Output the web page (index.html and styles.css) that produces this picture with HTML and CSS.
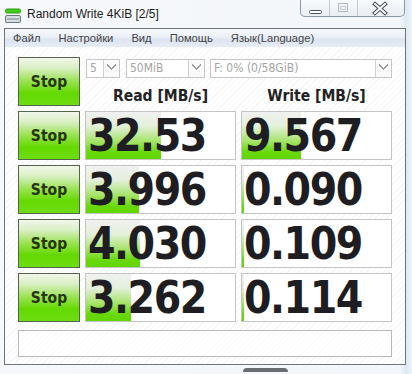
FILE: index.html
```html
<!DOCTYPE html>
<html lang="ru">
<head>
    <meta charset="UTF-8">
    <meta name="viewport" content="width=device-width, initial-scale=1.0">
    <title>Random Write 4KiB [2/5]</title>
    <link rel="stylesheet" href="styles.css">
</head>
<body>

<div class="window">
    <div class="titlebar">
        <svg class="app-icon" width="16" height="16" viewBox="0 0 16 16">
            <rect x="0.5" y="1" width="15" height="4" rx="1.5" fill="#3fcf1a" stroke="#2c9a10" stroke-width="1"/>
            <rect x="0.5" y="7.5" width="15" height="7" rx="1.5" fill="#d8dde2" stroke="#6d747c" stroke-width="1"/>
            <line x1="2" y1="11" x2="14" y2="11" stroke="#7c848c" stroke-width="1"/>
        </svg>
        <span class="title">Random Write 4KiB [2/5]</span>
        <div class="caption">
            <div class="cap-btn cap-min">
                <svg width="28" height="16" viewBox="0 0 28 16">
                    <rect x="8.5" y="10.5" width="12" height="3" rx="1" fill="#fff" stroke="#4a4f56"/>
                </svg>
            </div>
            <div class="cap-btn cap-max">
                <svg width="27" height="16" viewBox="0 0 27 16">
                    <rect x="8.5" y="3.5" width="9" height="8" fill="none" stroke="#b4bac2"/>
                    <rect x="10.5" y="6.5" width="5" height="3" fill="none" stroke="#c8cdd3"/>
                </svg>
            </div>
            <div class="cap-btn cap-close">
                <svg width="46" height="16" viewBox="0 0 46 16">
                    <path d="M17 4 L27 13 M27 4 L17 13" stroke="#4a4f56" stroke-width="4" stroke-linecap="square"/>
                    <path d="M17 4 L27 13 M27 4 L17 13" stroke="#f4f6f8" stroke-width="2" stroke-linecap="square"/>
                </svg>
            </div>
        </div>
    </div>

    <div class="client">
        <div class="menubar">
            <span>Файл</span>
            <span>Настройки</span>
            <span>Вид</span>
            <span>Помощь</span>
            <span>Язык(Language)</span>
        </div>

        <div class="panel">
            <button class="stop">Stop</button>
            <div class="setup">
                <div class="combos">
                    <div class="combo combo-count"><span>5</span><i class="arrow"></i></div>
                    <div class="combo combo-size"><span>50MiB</span><i class="arrow"></i></div>
                    <div class="combo combo-drive"><span>F: 0% (0/58GiB)</span><i class="arrow"></i></div>
                </div>
                <div class="heads">
                    <div>Read [MB/s]</div>
                    <div>Write [MB/s]</div>
                </div>
            </div>

            <button class="stop">Stop</button>
            <div class="result"><div class="bar" style="width:75px"></div><span>32.53</span></div>
            <div class="result"><div class="bar" style="width:59px"></div><span>9.567</span></div>

            <button class="stop">Stop</button>
            <div class="result"><div class="bar" style="width:53px"></div><span>3.996</span></div>
            <div class="result"><div class="bar" style="width:2px"></div><span>0.090</span></div>

            <button class="stop">Stop</button>
            <div class="result"><div class="bar" style="width:54px"></div><span>4.030</span></div>
            <div class="result"><div class="bar" style="width:2px"></div><span>0.109</span></div>

            <button class="stop">Stop</button>
            <div class="result"><div class="bar" style="width:45px"></div><span>3.262</span></div>
            <div class="result"><div class="bar" style="width:2px"></div><span>0.114</span></div>

            <div class="comment"></div>
        </div>
    </div>
    <div class="frame-bottom"><div class="blob"></div></div>
</div>

</body>
</html>
```

FILE: styles.css
```css
body{
    margin:0;
    padding:0;
    background-color:#f3f6fa;
    font-family:"Liberation Sans", Arial, sans-serif;
}
.window{
    width:412px;
    height:374px;
    display:flex;
    flex-direction:column;
    background:linear-gradient(to right, #f6f8fb 0, #f3f6fa 400px, #dfe8f2 406px, #eef3f9 412px);
}

/* title bar */
.titlebar{
    height:28px;
    display:flex;
    align-items:flex-start;
    flex-shrink:0;
}
.app-icon{
    margin:8px 0 0 5px;
}
.title{
    margin:5px 0 0 6px;
    font-size:12px;
    line-height:18px;
    color:#1b1b1b;
}
.caption{
    margin-left:auto;
    margin-right:7px;
    display:flex;
    height:17px;
    border:1px solid #8d99aa;
    border-top:none;
    border-radius:0 0 5px 5px;
    background:linear-gradient(#f8fafc, #e9eef4);
    box-sizing:border-box;
    overflow:hidden;
}
.cap-btn{
    height:16px;
}
.cap-btn + .cap-btn{
    border-left:1px solid #c2cad5;
}
.cap-btn svg{
    display:block;
}

/* client area */
.client{
    width:402px;
    margin-left:4px;
    border:1px solid #6e747a;
    box-sizing:border-box;
    display:flex;
    flex-direction:column;
    background:repeating-linear-gradient(135deg, #ffffff 0, #ffffff 3px, #f6f6f6 3px, #f6f6f6 4px);
}
.menubar{
    height:18px;
    display:flex;
    align-items:center;
    gap:18px;
    padding-left:8px;
    font-size:11.2px;
    color:#444;
    background:linear-gradient(#f7f9fc 0, #eaeff6 45%, #dce4f1 60%, #e6ecf5 100%);
}
.panel{
    display:grid;
    grid-template-columns:62px 151px 151px;
    grid-template-rows:repeat(5, 49px) 30px;
    column-gap:5px;
    row-gap:5px;
    padding:10px 0 7px 13px;
}
.stop{
    margin:0;
    padding:0;
    width:62px;
    height:49px;
    border:1px solid #55634b;
    background:linear-gradient(#f2f7ec 0, #d8efc2 22%, #98e24e 50%, #63d900 75%, #6fdd14 100%);
    font-family:"DejaVu Sans Condensed", "DejaVu Sans", sans-serif;
    font-stretch:condensed;
    font-weight:bold;
    font-size:15.5px;
    color:#263610;
    cursor:pointer;
}
.panel > .stop{
    margin-right:-1px;
}

/* first row */
.setup{
    grid-column:2 / 4;
    display:flex;
    flex-direction:column;
    justify-content:space-between;
}
.combos{
    display:flex;
    margin-top:2px;
    padding-left:1px;
}
.combo{
    height:19px;
    box-sizing:border-box;
    border:1px solid #c6c6c6;
    background:#fff;
    display:flex;
    align-items:stretch;
    font-family:"DejaVu Sans Condensed", "DejaVu Sans", sans-serif;
    font-stretch:condensed;
    font-size:12px;
    color:#a3a3a3;
}
.combo span{
    flex:1;
    padding-left:3px;
    line-height:17px;
    white-space:nowrap;
    overflow:hidden;
}
.combo-count{
    width:34px;
}
.combo-size{
    width:79px;
    margin-left:6px;
}
.combo-drive{
    width:182px;
    margin-left:5px;
}
.arrow{
    width:15px;
    border-left:1px solid #d0d0d0;
    background:
        linear-gradient(45deg, transparent 45%, #9a9a9a 45%, #9a9a9a 60%, transparent 60%) 3px 4px / 5px 6px no-repeat,
        linear-gradient(-45deg, transparent 45%, #9a9a9a 45%, #9a9a9a 60%, transparent 60%) 7px 4px / 5px 6px no-repeat,
        #fafafa;
}
.heads{
    display:grid;
    grid-template-columns:151px 151px;
    column-gap:5px;
    text-align:center;
    font-family:"DejaVu Sans Condensed", "DejaVu Sans", sans-serif;
    font-stretch:condensed;
    font-weight:bold;
    font-size:15.5px;
    line-height:18px;
    color:#222;
    padding-bottom:1px;
}

/* results */
.result{
    position:relative;
    border:1px solid #c4c4c4;
    background:#fff;
    display:flex;
    align-items:center;
    overflow:hidden;
}
.result .bar{
    position:absolute;
    left:0;
    top:0;
    bottom:0;
    background:linear-gradient(#f1f1f1 0, #e4efdc 30%, #a6e46a 62%, #69d80c 85%, #62d600 100%);
}
.result span{
    position:relative;
    padding-left:2px;
    font-family:"DejaVu Sans Condensed", "DejaVu Sans", sans-serif;
    font-stretch:condensed;
    font-weight:bold;
    font-size:44px;
    letter-spacing:-1.5px;
    line-height:44px;
    color:#1d1d22;
}
.comment{
    grid-column:1 / 4;
    margin-top:3px;
    border:1px solid #b9b9b9;
    background:rgba(255, 255, 255, 0.6);
}

.frame-bottom{
    flex:1;
    position:relative;
}
.blob{
    position:absolute;
    left:243px;
    top:3px;
    width:45px;
    height:4px;
    border-radius:6px 6px 0 0;
    background:#6a6d72;
}
```
